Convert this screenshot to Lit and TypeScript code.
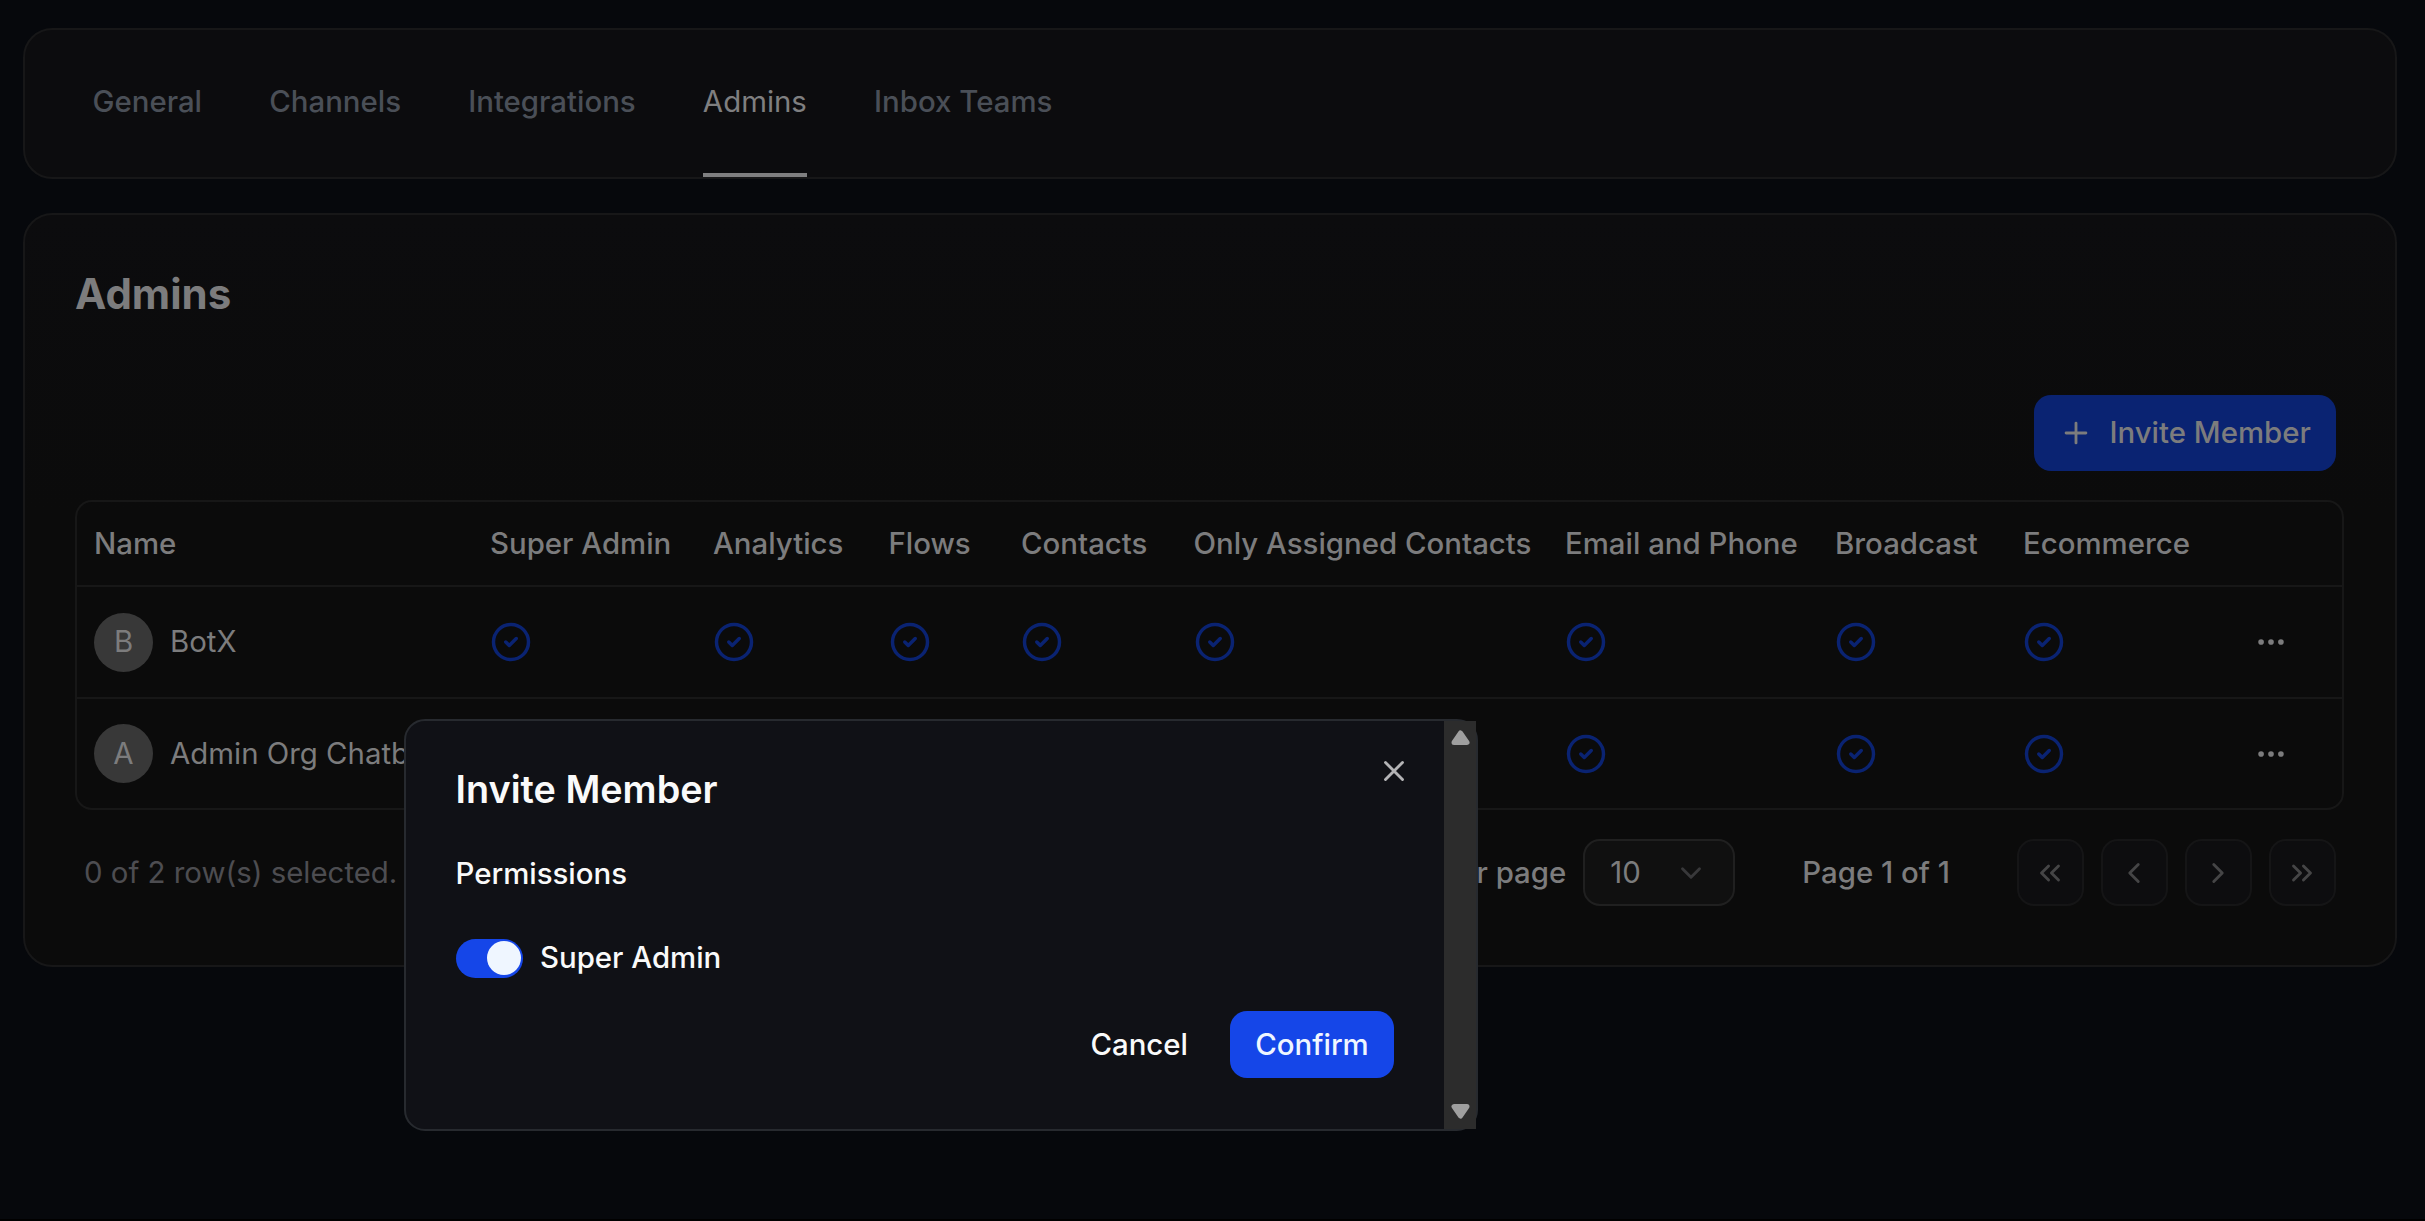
import { LitElement, html, css, svg } from "lit";
import { customElement } from "lit/decorators.js";

const TABS = ["General", "Channels", "Integrations", "Admins", "Inbox Teams"];
const COLUMNS = ["Super Admin", "Analytics", "Flows", "Contacts", "Only Assigned Contacts", "Email and Phone", "Broadcast", "Ecommerce"];
const MEMBERS = ["BotX", "Admin Org Chatbot"];

const icon = (body: unknown, cls = "") => html`<svg class="icon ${cls}" viewBox="0 0 24 24">${body}</svg>`;
const check = svg`<circle cx="12" cy="12" r="10"/><path d="m9 12 2 2 4-4"/>`;
const dots = svg`<circle cx="12" cy="12" r="1"/><circle cx="19" cy="12" r="1"/><circle cx="5" cy="12" r="1"/>`;
const plus = svg`<path d="M5 12h14M12 5v14"/>`;
const cross = svg`<path d="M18 6 6 18M6 6l12 12"/>`;
const down = svg`<path d="m6 9 6 6 6-6"/>`;
const pagers = [
  svg`<path d="m11 17-5-5 5-5M18 17l-5-5 5-5"/>`,
  svg`<path d="m15 18-6-6 6-6"/>`,
  svg`<path d="m9 18 6-6-6-6"/>`,
  svg`<path d="m6 17 5-5-5-5M13 17l5-5-5-5"/>`,
];

@customElement("app-root")
export class AppRoot extends LitElement {
  static styles = css`
    :host { display: block; font-family: Inter, "Liberation Sans", sans-serif; font-size: 29.4px; line-height: 42px; color: #7c7c7d; }
    * { box-sizing: border-box; }
    .page { position: relative; height: 1221px; overflow: hidden; background: #06080c; padding: 28px 28px 0 23px; border-bottom: 2px solid #000; }
    .card { background: #0c0c0e; border: 2px solid #171718; border-radius: 29.4px; }
    .tabs { height: 151px; display: flex; gap: 67.2px; padding: 0 67.5px; }
    .tab { height: 147px; padding-top: 51px; color: #4a4f57; border-bottom: 4px solid transparent; white-space: nowrap; font-weight: 500; }
    .tab.active { color: #7f7f80; border-color: #7f7f80; font-weight: 400; }
    .panel { margin-top: 34px; height: 754px; padding: 54px 51px 0 50px; display: flex; flex-direction: column; background: linear-gradient(#0c0c0e, #0b0b0b 40%); }
    h1 { margin: 0; font-size: 42px; line-height: 50px; font-weight: 700; }
    .bar { display: flex; justify-content: flex-end; margin: 76px 8px 0 0; }
    .invite { width: 302px; height: 76px; border-radius: 17px; background: #0a2372; display: flex; align-items: center; font-weight: 500; padding-left: 25px; gap: 16.5px; white-space: nowrap; }
    .icon { width: 34px; height: 34px; fill: none; stroke: currentColor; stroke-width: 2; stroke-linecap: round; stroke-linejoin: round; display: block; flex: none; }
    .table { margin-top: 29px; border: 2px solid #171717; border-radius: 17px; }
    .row { display: grid; grid-template-columns: 396px 223px 175.5px 132.5px 172.5px 371.5px 270px 188px 1fr; height: 111px; padding-left: 17px; align-items: center; border-top: 2px solid #171717; white-space: nowrap; }
    .row:first-child { height: 83px; border-top: 0; font-weight: 500; }
    .row:nth-child(2) { height: 112px; }
    .member { display: flex; align-items: center; gap: 17px; }
    .avatar { width: 59px; height: 59px; border-radius: 50%; background: #383838; display: grid; place-items: center; }
    .check { width: 42px; height: 42px; color: #0a2372; }
    .last { display: flex; justify-content: space-between; align-items: center; padding-right: 54px; }
    .foot { display: flex; align-items: center; margin: 29px 8px 0 9px; height: 67px; font-weight: 500; white-space: nowrap; }
    .picked { font-weight: 400; color: #4d4d51; flex: 1; }
    .select { width: 152px; height: 67px; border: 2px solid #202020; border-radius: 17px; background: #101010; margin: 0 67px 0 17px; padding: 0 25px; display: flex; align-items: center; justify-content: space-between; font-weight: 400; }
    .select .icon { color: #38383a; }
    .pages { display: flex; gap: 17px; margin-left: 67px; }
    .pager { width: 67px; height: 67px; border: 2px solid #151516; border-radius: 17px; background: #0d0d0f; color: #454546; display: grid; place-items: center; padding-right: 1px; }
    .modal { position: absolute; left: 404px; top: 719px; width: 1074px; height: 412px; border: 2px solid #272a2f; border-radius: 21px; background: #101116; color: #fafafa; display: flex; }
    .content { flex: 1; padding: 49px 50px 0 49.5px; position: relative; }
    h2 { margin: 0; font-size: 37.8px; line-height: 38px; font-weight: 600; }
    .label { font-weight: 500; margin-top: 45px; line-height: 42px; }
    .toggle { display: flex; align-items: center; gap: 17px; font-weight: 500; margin-top: 42px; }
    .track { width: 67.5px; height: 39px; border-radius: 20px; background: #1546e8; padding: 2px; display: flex; justify-content: flex-end; }
    .thumb { width: 34px; height: 34px; border-radius: 50%; background: #eff6ff; }
    .actions { display: flex; justify-content: flex-end; align-items: center; gap: 42px; margin-top: 32px; font-weight: 500; }
    .confirm { width: 164px; height: 67px; border-radius: 17px; background: #1546e8; color: #eff6ff; display: grid; place-items: center; }
    .close { position: absolute; right: 33px; top: 32.5px; color: #b4b4b6; }
    .scroll { width: 32px; background: #2c2c2c; display: flex; flex-direction: column; justify-content: space-between; align-items: center; padding: 9px 0 10px; }
    .arrow { width: 19px; height: 15px; fill: #9f9f9f; stroke: #9f9f9f; stroke-width: 5; stroke-linejoin: round; display: block; }
  `;

  render() {
    return html`<div class="page">
      <nav class="card tabs">${TABS.map((t) => html`<div class="tab ${t === "Admins" ? "active" : ""}">${t}</div>`)}</nav>
      <main class="card panel">
        <h1>Admins</h1>
        <div class="bar"><div class="invite">${icon(plus)}<span>Invite Member</span></div></div>
        <div class="table">
          <div class="row"><span>Name</span>${COLUMNS.map((c) => html`<span>${c}</span>`)}</div>
          ${MEMBERS.map((m) => html`<div class="row">
            <div class="member"><span class="avatar">${m[0]}</span><span>${m}</span></div>
            ${COLUMNS.map((_, i) => i < COLUMNS.length - 1
              ? icon(check, "check")
              : html`<div class="last">${icon(check, "check")}${icon(dots)}</div>`)}
          </div>`)}
        </div>
        <div class="foot">
          <span class="picked">0 of 2 row(s) selected.</span>
          <span>Rows per page</span>
          <div class="select"><span>10</span>${icon(down)}</div>
          <span>Page 1 of 1</span>
          <div class="pages">${pagers.map((p) => html`<div class="pager">${icon(p)}</div>`)}</div>
        </div>
      </main>
      <section class="modal">
        <div class="content">
          <h2>Invite Member</h2>
          <div class="label">Permissions</div>
          <div class="toggle"><span class="track"><span class="thumb"></span></span><span>Super Admin</span></div>
          <div class="actions"><span>Cancel</span><span class="confirm">Confirm</span></div>
          ${icon(cross, "close")}
        </div>
        <div class="scroll">
          <svg class="arrow" viewBox="0 0 19 15"><path d="M9.5 3 16 12.5H3Z"/></svg>
          <svg class="arrow" viewBox="0 0 19 15"><path d="M9.5 12 3 2.5h13Z"/></svg>
        </div>
      </section>
    </div>`;
  }
}
